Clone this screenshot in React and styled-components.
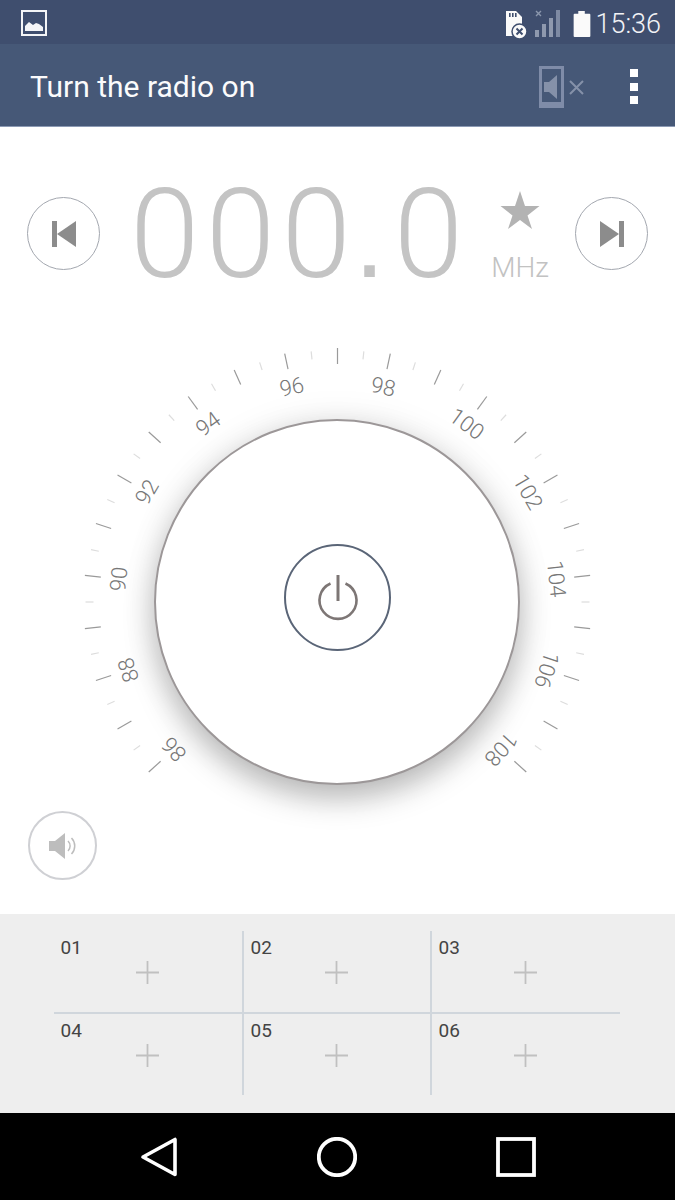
import styled, { createGlobalStyle } from "styled-components";

const GlobalStyle = createGlobalStyle`
  html, body {
    margin: 0;
    padding: 0;
    background: #fff;
  }
  * {
    box-sizing: border-box;
  }
`;

const Screen = styled.div`
  width: 675px;
  height: 1200px;
  display: flex;
  flex-direction: column;
  overflow: hidden;
  font-family: Roboto, "Liberation Sans", sans-serif;
`;

const StatusBar = styled.div`
  height: 44px;
  background: #3f4e6e;
  display: flex;
  align-items: center;
  justify-content: space-between;
  padding: 4px 14px 0 21px;
  color: #f2f3f6;
`;

const PictureIcon = styled.svg`
  margin-top: -3px;
`;

const StatusRight = styled.div`
  display: flex;
  align-items: center;
`;

const Clock = styled.span`
  font-size: 27px;
  font-weight: 300;
  margin-left: 3px;
  line-height: 40px;
`;

const AppBar = styled.div`
  height: 83px;
  background: #465877;
  border-bottom: 1px solid #8c9ab4;
  display: flex;
  align-items: center;
  padding: 3px 0 0 30px;
`;

const Title = styled.div`
  flex: 1;
  color: #fbfbfc;
  font-size: 30px;
  font-weight: 400;
`;

const MenuDots = styled.div`
  width: 8px;
  margin: 0 37px 0 45px;
  display: flex;
  flex-direction: column;
  gap: 5.5px;

  span {
    height: 8px;
    background: #fff;
  }
`;

const Main = styled.div`
  flex: 1;
  background: #fff;
`;

const FreqRow = styled.div`
  height: 73px;
  margin-top: 70px;
  padding: 0 27px;
  display: flex;
  align-items: center;
`;

const RoundButton = styled.div`
  width: ${(props) => props.size}px;
  height: ${(props) => props.size}px;
  border-radius: 50%;
  border: ${(props) => (props.soft ? "2px solid #cfd0d4" : "1.5px solid #a3a7af")};
  background: #fff;
  display: flex;
  align-items: center;
  justify-content: center;
  flex-shrink: 0;
`;

const Digits = styled.div`
  width: 358px;
  margin: 5px 0 0 30px;
  font-size: 125px;
  font-weight: 300;
  line-height: 73px;
  letter-spacing: 6.4px;
  color: #c4c4c4;
  white-space: nowrap;
`;

const TightDigit = styled.span`
  letter-spacing: 0;
`;

const DecimalDot = styled.span`
  display: inline-block;
  width: 39.5px;
  margin-left: 3.5px;
  font-family: "Liberation Sans", Arial, sans-serif;
  font-size: 110px;
  font-weight: 400;
  letter-spacing: 0;
`;

const UnitBox = styled.div`
  width: 58px;
  margin: 6px 26px 0 3px;
  display: flex;
  flex-direction: column;
  align-items: center;
`;

const Unit = styled.div`
  font-size: 28px;
  font-weight: 300;
  color: #c2c2c2;
  line-height: 30px;
  margin-top: 23px;
  white-space: nowrap;
`;

const DialArea = styled.div`
  position: relative;
  width: 675px;
  height: 470px;
  margin-top: 70px;
`;

const DialScale = styled.svg`
  display: block;

  text {
    font-family: Roboto, "Liberation Sans", sans-serif;
    font-size: 22px;
    font-weight: 300;
    fill: #777;
    text-anchor: middle;
    dominant-baseline: central;
  }
`;

const Disc = styled.div`
  position: absolute;
  left: 154px;
  top: 79px;
  width: 366px;
  height: 366px;
  border-radius: 50%;
  background: #fff;
  border: 2px solid #9c9798;
  box-shadow: 0 14px 30px rgba(0, 0, 0, 0.25), 0 0 36px rgba(0, 0, 0, 0.08);
  display: flex;
  align-items: center;
  justify-content: center;
`;

const PowerButton = styled.div`
  width: 107px;
  height: 107px;
  margin: -10px 0 0 1px;
  border-radius: 50%;
  border: 2px solid #5a6577;
  display: flex;
  align-items: center;
  justify-content: center;
`;

const VolumeSlot = styled.div`
  margin: 1px 0 0 28px;
`;

const Presets = styled.div`
  height: 199px;
  background: #eeeeee;
  padding: 17px 55px 18px 54px;
  display: grid;
  grid-template-columns: 190px 188px 188px;
  grid-template-rows: 83px 81px;
`;

const PresetCell = styled.div`
  display: flex;
  flex-direction: column;
  padding-top: 5px;
  border-right: ${(props) => (props.lastCol ? "none" : "2px solid #d0d6dc")};
  border-bottom: ${(props) => (props.lastRow ? "none" : "2px solid #d0d6dc")};
`;

const PresetLabel = styled.div`
  font-size: 19px;
  line-height: 24px;
  color: #444;
  padding-left: 6.5px;
`;

const PlusIcon = styled.svg`
  align-self: center;
  margin: 1px 1px 0 0;
`;

const NavBar = styled.div`
  height: 87px;
  background: #000;
  display: flex;
  align-items: center;
  padding-left: 140px;
  gap: 139px;
`;

const presets = ["01", "02", "03", "04", "05", "06"];

const CX = 337.5;
const CY = 262;

const ticks = [];
for (let a = -132; a <= 132; a += 6) ticks.push(a);

const labels = [
  [86, -132],
  [88, -108],
  [90, -84],
  [92, -60],
  [94, -36],
  [96, -12],
  [98, 12],
  [100, 36],
  [102, 60],
  [104, 84],
  [106, 108],
  [108, 132],
];

const ImageIcon = () => (
  <PictureIcon width="26" height="26" viewBox="0 0 26 26">
    <rect x="1" y="1" width="24" height="24" fill="none" stroke="#f4f5f7" strokeWidth="2" />
    <path d="M4 21v-5l4-4 4 3 3-2 3 1 4 3v4z" fill="#f4f5f7" />
  </PictureIcon>
);

const SdIcon = () => (
  <svg width="24" height="30" viewBox="0 0 24 30">
    <path d="M1 2h10l6 6v19H1z" fill="#fafafa" />
    <path d="M4 4h1.6v4H4zM7 4h1.6v4H7zM10 4h1.6v4H10z" fill="#3f4e6e" />
    <circle cx="14.5" cy="22.5" r="7.5" fill="#fafafa" stroke="#3f4e6e" strokeWidth="1.5" />
    <path d="M11.5 19.5l6 6M17.5 19.5l-6 6" stroke="#3f4e6e" strokeWidth="2" />
  </svg>
);

const SignalIcon = () => (
  <svg width="28" height="30" viewBox="0 0 28 30" style={{ marginLeft: 5 }}>
    <path d="M2 2l5 5M7 2l-5 5" stroke="#8b97ad" strokeWidth="1.4" />
    <rect x="1" y="21" width="4" height="7" fill="#8f99ae" />
    <rect x="8" y="15" width="4" height="13" fill="#8f99ae" />
    <rect x="15" y="9" width="4" height="19" fill="#8f99ae" />
    <rect x="22" y="1" width="4" height="27" fill="#7e8aa3" />
  </svg>
);

const BatteryIcon = () => (
  <svg width="20" height="26" viewBox="0 0 20 28" style={{ marginLeft: 10 }}>
    <path d="M6 0h7v3h5a1 1 0 0 1 1 1v23a1 1 0 0 1-1 1H2a1 1 0 0 1-1-1V4a1 1 0 0 1 1-1h4z" fill="#fafafa" />
  </svg>
);

const MuteIcon = () => (
  <svg width="46" height="42" viewBox="0 0 46 42">
    <rect x="1.5" y="1.5" width="22" height="39" fill="none" stroke="#7f8ca8" strokeWidth="3" />
    <rect x="0" y="36" width="25" height="6" fill="#7f8ca8" />
    <path d="M5 16h5l8-7v24l-8-7H5z" fill="#8591a9" />
    <path d="M31 15l13 13M44 15L31 28" stroke="#8591a9" strokeWidth="2" />
  </svg>
);

const PowerIcon = () => (
  <svg width="44" height="50" viewBox="0 0 44 50">
    <path d="M14.5 11.5a18.5 18.5 0 1 0 15 0" fill="none" stroke="#7d7675" strokeWidth="2.6" />
    <path d="M22 3v26" stroke="#7d7675" strokeWidth="3" />
  </svg>
);

const Plus = () => (
  <PlusIcon width="23" height="23" viewBox="0 0 23 23">
    <path d="M11.5 0v23M0 11.5h23" stroke="#c0c0c0" strokeWidth="1.8" />
  </PlusIcon>
);

const App = () => {
  return (
    <Screen>
      <GlobalStyle />
      <StatusBar>
        <ImageIcon />
        <StatusRight>
          <SdIcon />
          <SignalIcon />
          <BatteryIcon />
          <Clock>15:36</Clock>
        </StatusRight>
      </StatusBar>

      <AppBar>
        <Title>Turn the radio on</Title>
        <MuteIcon />
        <MenuDots>
          <span />
          <span />
          <span />
        </MenuDots>
      </AppBar>

      <Main>
        <FreqRow>
          <RoundButton size={73}>
            <svg width="24" height="28" viewBox="0 0 24 28">
              <rect x="0" y="1" width="5" height="26" fill="#8c8c8c" />
              <path d="M24 1v26L5 14z" fill="#8c8c8c" />
            </svg>
          </RoundButton>
          <Digits>
            00<TightDigit>0</TightDigit>
            <DecimalDot>.</DecimalDot>0
          </Digits>
          <UnitBox>
            <svg width="40" height="40" viewBox="0 0 40 40">
              <path d="M20 1l5 15h14.500L27.500 25.500 32 39 20 30 8 39l4.500-13.500L.5 16H15z" fill="#b3b3b3" />
            </svg>
            <Unit>MHz</Unit>
          </UnitBox>
          <RoundButton size={73}>
            <svg width="24" height="28" viewBox="0 0 24 28">
              <path d="M0 1v26l19-13z" fill="#8c8c8c" />
              <rect x="19" y="1" width="5" height="26" fill="#8c8c8c" />
            </svg>
          </RoundButton>
        </FreqRow>

        <DialArea>
          <DialScale width="675" height="470" viewBox="0 0 675 470">
            {ticks.map((a) => {
              const major = a % 12 === 0;
              return (
                <line
                  key={a}
                  x1={CX}
                  x2={CX}
                  y1={CY - (major ? 238 : 244)}
                  y2={CY - (major ? 254 : 252)}
                  stroke={major ? "#9a9a9a" : "#dddddd"}
                  strokeWidth={1.2}
                  transform={`rotate(${a} ${CX} ${CY})`}
                />
              );
            })}
            {labels.map(([value, a]) => (
              <text key={value} x={CX} y={CY - 220} transform={`rotate(${a} ${CX} ${CY})`}>
                {value}
              </text>
            ))}
          </DialScale>
          <Disc>
            <PowerButton>
              <PowerIcon />
            </PowerButton>
          </Disc>
        </DialArea>

        <VolumeSlot>
          <RoundButton size={69} soft>
            <svg width="28" height="28" viewBox="0 0 28 28">
              <path d="M0 9h6l10-8v26L6 19H0z" fill="#bdbdbd" />
              <path d="M19 9a7 7 0 0 1 0 10M22.500 6a11.500 11.500 0 0 1 0 16" fill="none" stroke="#bdbdbd" strokeWidth="1.5" />
            </svg>
          </RoundButton>
        </VolumeSlot>
      </Main>

      <Presets>
        {presets.map((label, i) => (
          <PresetCell key={label} lastCol={i % 3 === 2} lastRow={i >= 3}>
            <PresetLabel>{label}</PresetLabel>
            <Plus />
          </PresetCell>
        ))}
      </Presets>

      <NavBar>
        <svg width="38" height="40" viewBox="0 0 38 40">
          <path d="M35 2.500v35L3 20z" fill="none" stroke="#fff" strokeWidth="3.600" strokeLinejoin="round" />
        </svg>
        <svg width="40" height="40" viewBox="0 0 40 40">
          <circle cx="20" cy="20" r="18.200" fill="none" stroke="#fff" strokeWidth="3.800" />
        </svg>
        <svg width="40" height="40" viewBox="0 0 40 40">
          <rect x="2" y="2" width="36" height="36" fill="none" stroke="#fff" strokeWidth="3.800" />
        </svg>
      </NavBar>
    </Screen>
  );
};

export default App;
